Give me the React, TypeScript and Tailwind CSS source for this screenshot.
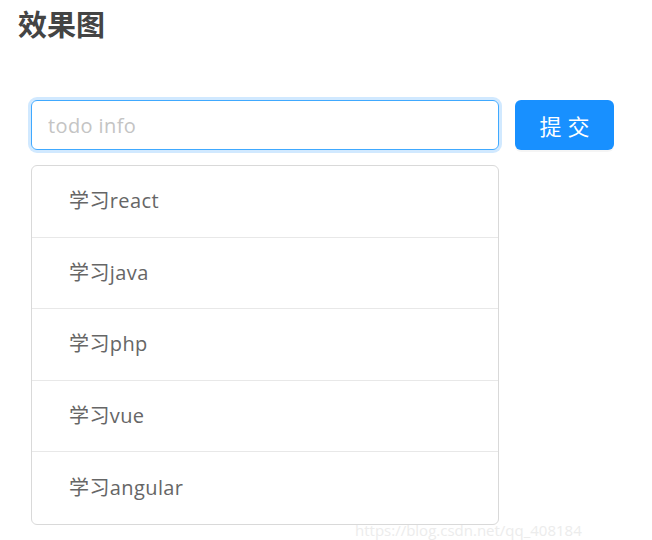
import React, { useState } from 'react';

const todos = ['学习react', '学习java', '学习php', '学习vue', '学习angular'];

export default function App() {
  const [value, setValue] = useState('');

  return (
    <div className="w-[652px] h-[540px] overflow-hidden bg-white relative font-['Open_Sans','Noto_Sans_CJK_SC',sans-serif]">
      <h2 className="pl-[18px] pt-[3px] text-[29px] leading-[40px] font-bold text-[#444] font-['Noto_Sans_CJK_SC',sans-serif]">效果图</h2>

      <div className="pl-[31px] pt-[57px]">
        <div className="flex gap-4 items-center">
          <input
            autoFocus
            value={value}
            onChange={(e) => setValue(e.target.value)}
            placeholder="todo info"
            className="w-[468px] h-[50px] px-[16px] rounded-[6px] border border-[#40a9ff] shadow-[0_0_0_3px_rgba(24,144,255,0.2)] outline-none text-[20px] tracking-[0.4px] text-[#595959] placeholder:text-[#c4c4c4] caret-[#333]"
          />
          <button className="w-[99px] h-[50px] rounded-[6px] bg-[#1890ff] text-white text-[22px] tracking-[6px] pl-[6px] shadow-[0_2px_0_rgba(0,0,0,0.04)] font-['Noto_Sans_CJK_SC',sans-serif]">
            提交
          </button>
        </div>

        <ul className="mt-[15px] w-[468px] border border-[#d9d9d9] rounded-[6px]">
          {todos.map((t, i) => (
            <li
              key={t}
              className={`h-[71.5px] flex items-center pl-[37px] text-[20px] tracking-[0.4px] text-[#666] ${i < todos.length - 1 ? 'border-b border-[#e8e8e8]' : ''}`}
            >
              {t}
            </li>
          ))}
        </ul>
      </div>

      <div className="absolute left-[355px] top-[521px] text-[15px] leading-[18px] text-[#ececec] whitespace-nowrap">
        https://blog.csdn.net/qq_408184
      </div>
    </div>
  );
}
